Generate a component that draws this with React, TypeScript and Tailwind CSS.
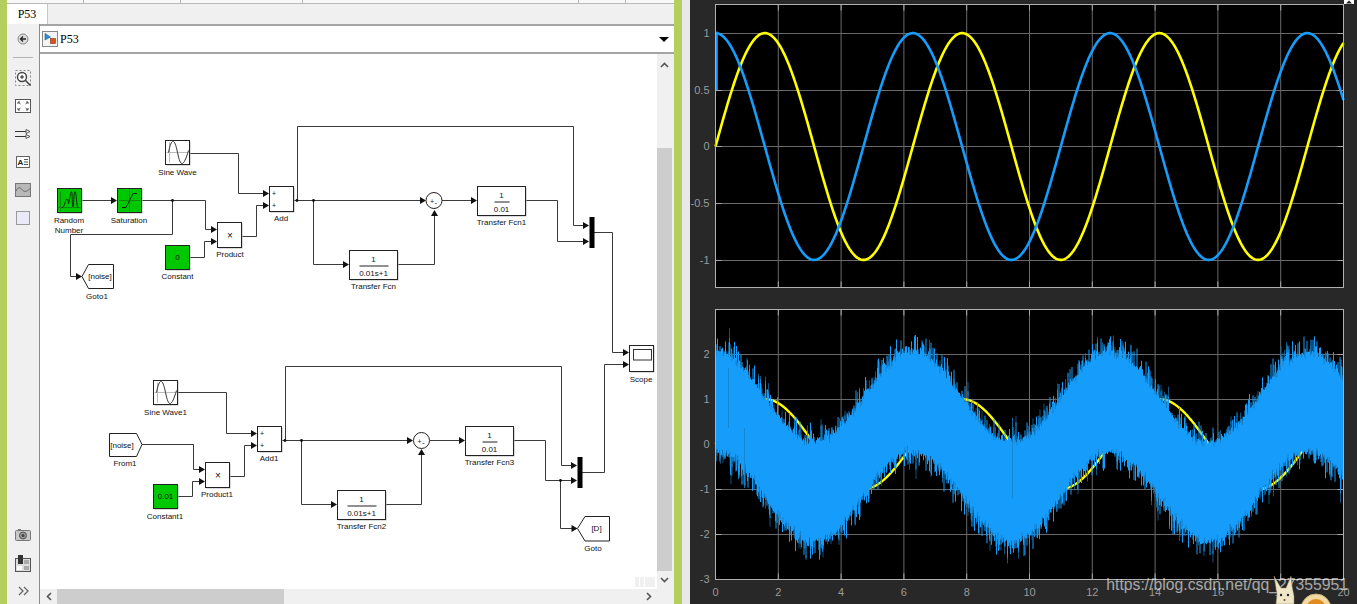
import type { ReactNode } from 'react'

const FONT = '"Liberation Sans", Arial, sans-serif'

// ---------- scope curves ----------
const AX_LEFT = 25.5
const PX_PER_T = 31.4
const tToX = (t: number) => AX_LEFT + t * PX_PER_T

function curve(fn: (t: number) => number, yOf: (v: number) => number) {
  let d = ''
  for (let x = 0; x <= 628; x += 1) {
    const t = x / PX_PER_T
    d += `${x === 0 ? 'M' : 'L'}${(AX_LEFT + x).toFixed(1)} ${yOf(fn(t)).toFixed(2)} `
  }
  return d
}

function rng(seed: number) {
  let a = seed
  return () => {
    a = (a + 0x6d2b79f5) | 0
    let r = Math.imul(a ^ (a >>> 15), 1 | a)
    r = (r + Math.imul(r ^ (r >>> 7), 61 | r)) ^ r
    return ((r ^ (r >>> 14)) >>> 0) / 4294967296
  }
}

const bottomY = (v: number) => 136 + -44.9 * v + 0

function noiseBand() {
  const rand = rng(27355951)
  let main = ''
  let dark = ''
  for (let x = 0; x <= 628; x += 0.5) {
    const t = x / PX_PER_T
    const c = Math.cos(t)
    const up = c + 0.98 + Math.pow(rand(), 4) * 0.42 + rand() * 0.1
    const down = c - 1.08 - Math.pow(rand(), 4) * 0.42 - rand() * 0.14
    main += `M${(AX_LEFT + x).toFixed(1)} ${bottomY(up).toFixed(1)}V${bottomY(down).toFixed(1)}`
    if (rand() < 0.14) {
      const extra = rand() * 0.22
      dark += `M${(AX_LEFT + x).toFixed(1)} ${bottomY(up + extra).toFixed(1)}V${bottomY(up - 0.08).toFixed(1)}`
    }
    if (rand() < 0.14) {
      const extra = rand() * 0.22
      dark += `M${(AX_LEFT + x).toFixed(1)} ${bottomY(down - extra).toFixed(1)}V${bottomY(down + 0.08).toFixed(1)}`
    }
  }
  return { main, dark }
}

const band = noiseBand()

function Axes({ top, bottom, yTicks, xLabels }: { top: number; bottom: number; yTicks: { y: number; label: string }[]; xLabels?: boolean }) {
  const xs = [0, 2, 4, 6, 8, 10, 12, 14, 16, 18, 20]
  return (
    <g fontFamily={FONT} fontSize="11" fill="#9a9a9a">
      {xs.slice(1, -1).map((t) => (
        <g key={t}>
          <path d={`M${tToX(t)} ${top}V${bottom}`} stroke="#6a6a6a" />
          <path d={`M${tToX(t)} ${top}v6M${tToX(t)} ${bottom}v-6`} stroke="#a8a8a8" />
        </g>
      ))}
      {yTicks.map((k) => (
        <g key={k.label}>
          <path d={`M${AX_LEFT} ${k.y}H653.5`} stroke="#6a6a6a" />
          <path d={`M${AX_LEFT} ${k.y}h6M653.5 ${k.y}h-6`} stroke="#a8a8a8" />
          <text x="19.5" y={k.y + 3.5} textAnchor="end">{k.label}</text>
        </g>
      ))}
      {xLabels &&
        xs.map((t) => (
          <text key={t} x={tToX(t)} y={bottom + 16} textAnchor="middle">{t}</text>
        ))}
    </g>
  )
}

function TopPlot() {
  const y = (v: number) => 146.5 - 113.4 * v * 1
  return (
    <svg width="667" height="298" className="block shrink-0">
      <rect x="25.5" y="4.5" width="628" height="283" fill="#000" />
      <Axes
        top={4.5}
        bottom={287.5}
        yTicks={[
          { y: 33.5, label: '1' },
          { y: 90.5, label: '0.5' },
          { y: 146.5, label: '0' },
          { y: 203.5, label: '-0.5' },
          { y: 260.5, label: '-1' },
        ]}
      />
      <path d={curve((t) => Math.sin(t), y)} fill="none" stroke="#ffff00" strokeWidth="2.6" />
      <path d={`M26.5 90V33 ${curve((t) => Math.cos(t), y).replace('M', 'L')}`} fill="none" stroke="#169dfb" strokeWidth="2.6" />
      <rect x="25.5" y="4.5" width="628" height="283" fill="none" stroke="#b0b0b0" />
      <rect x="654" y="0" width="10" height="4" fill="#fff" />
      <path d="M659 .5l-3 3h6z" fill="#222" />
    </svg>
  )
}

function BottomPlot() {
  return (
    <svg width="667" height="306" className="block shrink-0">
      <rect x="25.5" y="1.5" width="628" height="270" fill="#000" />
      <Axes
        top={1.5}
        bottom={271.5}
        yTicks={[
          { y: 46.5, label: '2' },
          { y: 91.5, label: '1' },
          { y: 136.5, label: '0' },
          { y: 181.5, label: '-1' },
          { y: 226.5, label: '-2' },
        ]}
        xLabels
      />
      <text x="19.5" y="275" textAnchor="end" fontFamily={FONT} fontSize="11" fill="#9a9a9a">-3</text>
      <path d={curve((t) => Math.sin(t), bottomY)} fill="none" stroke="#ffff00" strokeWidth="2.4" />
      <path d={band.main} fill="none" stroke="#169dfb" strokeWidth="1" />
      <path d={band.dark} fill="none" stroke="#1477b8" strokeWidth="0.7" />
      <path d="M38.5 60V120M54.5 120V180M322.5 110V190" fill="none" stroke="#1480c8" strokeWidth="0.8" />
      <rect x="25.5" y="1.5" width="628" height="270" fill="none" stroke="#b0b0b0" />
    </svg>
  )
}

// ---------- simulink diagram (coordinates are page coordinates shifted by canvas origin) ----------
const OX = 40
const OY = 54

function Wire({ d }: { d: string }) {
  return <path d={d} fill="none" stroke="#3a3a3a" strokeWidth="1" />
}

function Arrow({ x, y, dir = 'r' }: { x: number; y: number; dir?: 'r' | 'u' }) {
  if (dir === 'u') return <path d={`M${x} ${y}l-3.5 6h7z`} fill="#111" />
  return <path d={`M${x} ${y}l-6 -3.5v7z`} fill="#111" />
}

function Dot({ x, y }: { x: number; y: number }) {
  return <circle cx={x} cy={y} r="1.4" fill="#111" />
}

function Label({ x, y, children, size = 8 }: { x: number; y: number; children: ReactNode; size?: number }) {
  return (
    <text x={x} y={y} textAnchor="middle" fontFamily={FONT} fontSize={size} fill="#111">
      {children}
    </text>
  )
}

function Box({ x, y, w, h, fill = '#fff', children }: { x: number; y: number; w: number; h: number; fill?: string; children?: ReactNode }) {
  return (
    <g>
      <rect x={x + 1} y={y + 1} width={w} height={h} fill="#b8b8b8" />
      <rect x={x} y={y} width={w} height={h} fill={fill} stroke="#222" />
      {children}
    </g>
  )
}

function SineBlock({ x, y, label }: { x: number; y: number; label: string }) {
  return (
    <Box x={x} y={y} w={24} h={24}>
      <path d={`M${x + 4} ${y + 2}V${y + 22}M${x + 1} ${y + 12}H${x + 23}`} stroke="#bbb" />
      <path
        d={`M${x + 3} ${y + 12}C${x + 6} ${y - 3} ${x + 9} ${y - 3} ${x + 12} ${y + 12}C${x + 15} ${y + 27} ${x + 18} ${y + 27} ${x + 23} ${y + 10}`}
        fill="none"
        stroke="#333"
      />
      <Label x={x + 12} y={y + 34}>{label}</Label>
    </Box>
  )
}

function TransferFcn({ x, y, den, label }: { x: number; y: number; den: string; label: string }) {
  return (
    <Box x={x} y={y} w={48} h={29}>
      <Label x={x + 24} y={y + 11}>1</Label>
      <path d={`M${x + (den.length > 4 ? 10 : 17)} ${y + 15.5}H${x + (den.length > 4 ? 39 : 32)}`} stroke="#222" />
      <Label x={x + 24} y={y + 25}>{den}</Label>
      <Label x={x + 24} y={y + 38.5}>{label}</Label>
    </Box>
  )
}

function SumBlock({ cx, cy }: { cx: number; cy: number }) {
  return (
    <g>
      <circle cx={cx} cy={cy} r="8" fill="#fff" stroke="#222" />
      <text x={cx - 4} y={cy + 3} fontFamily={FONT} fontSize="7" fill="#222">+</text>
      <text x={cx + 0.5} y={cy + 4} fontFamily={FONT} fontSize="8" fill="#222">-</text>
    </g>
  )
}

function Diagram() {
  return (
    <svg width="617" height="535" viewBox={`${OX} ${OY} 617 535`} className="block">
      {/* upper loop */}
      <Wire d="M82 200.5H112M142 200.5H205.5V229.5H212M172.5 200.5V234.5H70.5V276.5H77" />
      <Wire d="M190 153.5H238.5V193.5H264M190 257.5H204.5V241.5H212M242 236.5H256.5V205.5H264" />
      <Wire d="M294 200.5H421M297.5 200.5V126.5H573.5V225.5H584M313.5 200.5V264.5H344M398 264.5H434.5V216" />
      <Wire d="M442 200.5H472M525 200.5H557.5V241.5H584M594 232.5H612.5V352.5H624M582 472.5H604.5V364.5H624" />
      {/* lower loop */}
      <Wire d="M142 444.5H193.5V469.5H200M178 392.5H226.5V433.5H252M178 496.5H192.5V481.5H200M230 476.5H244.5V445.5H252" />
      <Wire d="M282 440.5H408M285.5 440.5V366.5H561.5V465.5H572M301.5 440.5V504.5H332M386 504.5H421.5V455" />
      <Wire d="M430 440.5H460M514 440.5H545.5V480.5H572M560.5 480.5V528.5H572" />

      <Arrow x={117} y={200.5} />
      <Arrow x={217} y={229.5} />
      <Arrow x={217} y={241.5} />
      <Arrow x={269} y={193.5} />
      <Arrow x={269} y={205.5} />
      <Arrow x={82} y={276.5} />
      <Arrow x={426} y={200.5} />
      <Arrow x={477} y={200.5} />
      <Arrow x={349} y={264.5} />
      <Arrow x={434.5} y={210} dir="u" />
      <Arrow x={589} y={225.5} />
      <Arrow x={589} y={241.5} />
      <Arrow x={629} y={352.5} />
      <Arrow x={629} y={364.5} />
      <Arrow x={205} y={469.5} />
      <Arrow x={205} y={481.5} />
      <Arrow x={257} y={433.5} />
      <Arrow x={257} y={445.5} />
      <Arrow x={413} y={440.5} />
      <Arrow x={465} y={440.5} />
      <Arrow x={337} y={504.5} />
      <Arrow x={421.5} y={449} dir="u" />
      <Arrow x={577} y={465.5} />
      <Arrow x={577} y={480.5} />
      <Arrow x={577.5} y={528.5} />

      <Dot x={172.5} y={200.5} />
      <Dot x={297} y={200.5} />
      <Dot x={313.5} y={200.5} />
      <Dot x={285} y={440.5} />
      <Dot x={301.5} y={440.5} />
      <Dot x={560.5} y={480.5} />

      <SineBlock x={165.5} y={140.5} label="Sine Wave" />
      <Box x={57.5} y={188.5} w={24} h={24} fill="#00c800">
        <path d="M60.5 191.5V210.5M58.5 207.5H80.5" stroke="#0a8a0a" />
        <path d="M62 207.5C65 207.5 65 199 67 199S68 207 69 202 70.5 191.5 71.5 191.5 72 207 73 207 73.5 191.5 75 191.5 76.5 208 78 208" fill="none" stroke="#0c2c0c" />
        <Label x={69} y={223}>Random</Label>
        <Label x={69} y={233}>Number</Label>
      </Box>
      <Box x={117.5} y={188.5} w={24} h={24} fill="#00c800">
        <path d="M129.5 190V211M119 200.5H140" stroke="#0a8a0a" />
        <path d="M122 207.5H126L133 193.5H137" fill="none" stroke="#0c2c0c" />
        <Label x={129} y={223}>Saturation</Label>
      </Box>
      <Box x={217.5} y={222.5} w={24} h={25}>
        <Label x={230} y={239} size={10}>×</Label>
        <Label x={230} y={257}>Product</Label>
      </Box>
      <Box x={165.5} y={245.5} w={24} h={24} fill="#00c800">
        <Label x={177.5} y={260}>0</Label>
        <Label x={177.5} y={279}>Constant</Label>
      </Box>
      <Box x={269.5} y={186.5} w={24} h={25}>
        <Label x={274} y={196} size={7}>+</Label>
        <Label x={274} y={208} size={7}>+</Label>
        <Label x={281} y={221}>Add</Label>
      </Box>
      <path d="M82 276.5L88.5 264.5H113.5V288.5H88.5Z" fill="#fff" stroke="#222" />
      <Label x={100} y={279}>[noise]</Label>
      <Label x={97} y={299}>Goto1</Label>
      <SumBlock cx={434} cy={200.5} />
      <TransferFcn x={477.5} y={186.5} den="0.01" label="Transfer Fcn1" />
      <TransferFcn x={349.5} y={250.5} den="0.01s+1" label="Transfer Fcn" />
      <rect x="589.5" y="217" width="5" height="31" fill="#000" />

      <Box x={629.5} y={345.5} w={24} h={26}>
        <rect x="633.5" y="349.5" width="18" height="10.5" fill="#fff" stroke="#333" />
        <Label x={641} y={382}>Scope</Label>
      </Box>

      <SineBlock x={153.5} y={380.5} label="Sine Wave1" />
      <path d="M109.5 433.5H136.5L142 444.5L136.5 456.5H109.5Z" fill="#fff" stroke="#222" />
      <Label x={122} y={447.5}>[noise]</Label>
      <Label x={125} y={466}>From1</Label>
      <Box x={205.5} y={462.5} w={24} h={25}>
        <Label x={218} y={479} size={10}>×</Label>
        <Label x={217} y={497}>Product1</Label>
      </Box>
      <Box x={153.5} y={484.5} w={24} h={24} fill="#00c800">
        <Label x={165.5} y={499}>0.01</Label>
        <Label x={165} y={519}>Constant1</Label>
      </Box>
      <Box x={257.5} y={426.5} w={24} h={25}>
        <Label x={262} y={436} size={7}>+</Label>
        <Label x={262} y={448} size={7}>+</Label>
        <Label x={269} y={461}>Add1</Label>
      </Box>
      <SumBlock cx={421.5} cy={440.5} />
      <TransferFcn x={465.5} y={426.5} den="0.01" label="Transfer Fcn3" />
      <TransferFcn x={337.5} y={490.5} den="0.01s+1" label="Transfer Fcn2" />
      <rect x="577.5" y="457" width="5" height="31" fill="#000" />
      <path d="M577.5 528.5L585 516.5H609.5V541H585Z" fill="#fff" stroke="#222" />
      <Label x={596.5} y={531}>[D]</Label>
      <Label x={593} y={551}>Goto</Label>
    </svg>
  )
}

// ---------- sidebar icons ----------
const icons: { key: string; node: ReactNode }[] = [
  {
    key: 'zoom',
    node: (
      <svg width="18" height="18" viewBox="0 0 18 18">
        <rect x="1.5" y="1.5" width="15" height="15" fill="none" stroke="#888" strokeDasharray="2 2" />
        <circle cx="8" cy="8" r="4.5" fill="#fff" stroke="#444" strokeWidth="1.4" />
        <path d="M6 8h4M8 6v4" stroke="#222" />
        <path d="M11.5 11.5l5 5" stroke="#444" strokeWidth="1.6" />
      </svg>
    ),
  },
  {
    key: 'fit',
    node: (
      <svg width="16" height="14" viewBox="0 0 16 14">
        <rect x=".5" y=".5" width="15" height="13" fill="#fff" stroke="#555" />
        <path d="M3 5V3h2M3 3l2.5 2M13 5V3h-2M13 3l-2.5 2M3 9v2h2M3 11l2.5-2M13 9v2h-2M13 11l-2.5-2" fill="none" stroke="#555" />
      </svg>
    ),
  },
  {
    key: 'lines',
    node: (
      <svg width="16" height="10" viewBox="0 0 16 10">
        <path d="M0 2.5H12M0 7.5H12" stroke="#333" />
        <path d="M11 .5l4 2-4 2zM11 5.5l4 2-4 2z" fill="#fff" stroke="#555" />
      </svg>
    ),
  },
  {
    key: 'note',
    node: (
      <svg width="14" height="12" viewBox="0 0 14 12">
        <rect x=".5" y=".5" width="13" height="11" fill="#fff" stroke="#666" />
        <text x="1.5" y="9" fontFamily={FONT} fontSize="8" fontWeight="700" fill="#222">A</text>
        <path d="M8 3.5h4M8 6h4M8 8.5h4" stroke="#555" />
      </svg>
    ),
  },
  {
    key: 'image',
    node: (
      <svg width="16" height="14" viewBox="0 0 16 14">
        <rect x=".5" y=".5" width="15" height="13" fill="#b8b8b8" stroke="#777" />
        <path d="M1 8c2-4 4-4 6-1.5s4 3 8-1" fill="none" stroke="#666" />
      </svg>
    ),
  },
  {
    key: 'area',
    node: (
      <svg width="14" height="14" viewBox="0 0 14 14">
        <rect x=".5" y=".5" width="13" height="13" fill="#e9e9f8" stroke="#999" />
      </svg>
    ),
  },
]

function SideSlot({ children, h = 'h-[28px]' }: { children: ReactNode; h?: string }) {
  return <div className={`flex items-center justify-center ${h}`}>{children}</div>
}

function Sidebar() {
  return (
    <div className="flex w-[32px] shrink-0 flex-col bg-[#f0f0f0] pt-px">
      <SideSlot>
        <svg width="12" height="12" viewBox="0 0 12 12">
          <circle cx="6" cy="6" r="5" fill="#ddd" stroke="#888" />
          <path d="M9 6H4M6 3.5L3.5 6 6 8.5" fill="none" stroke="#222" strokeWidth="1.3" />
        </svg>
      </SideSlot>
      <div className="mx-[6px] mt-[4px] mb-[6px] h-px bg-[#b4b4b4]" />
      {icons.map((i) => (
        <SideSlot key={i.key}>{i.node}</SideSlot>
      ))}
      <div className="mt-auto">
        <SideSlot>
          <svg width="16" height="12" viewBox="0 0 16 12">
            <rect x=".5" y="1.5" width="15" height="10" rx="1" fill="#c8c8c8" stroke="#777" />
            <circle cx="8" cy="6.5" r="3.5" fill="#999" stroke="#555" />
            <circle cx="8" cy="6.5" r="1.5" fill="#444" />
            <path d="M3 .5h3" stroke="#777" />
          </svg>
        </SideSlot>
        <SideSlot>
          <svg width="16" height="17" viewBox="0 0 16 17">
            <rect x=".5" y="3.5" width="15" height="13" fill="#ddd" stroke="#555" />
            <rect x="9" y="5" width="5" height="4" fill="#aaa" />
            <rect x="9" y="11" width="5" height="4" fill="#aaa" />
            <rect x="2" y="11" width="5" height="4" fill="#fff" />
            <rect x="3" y="0" width="5" height="9" fill="#333" />
          </svg>
        </SideSlot>
        <SideSlot h="h-[27px]">
          <svg width="11" height="10" viewBox="0 0 11 10">
            <path d="M1 1l4 4-4 4M6 1l4 4-4 4" fill="none" stroke="#666" strokeWidth="1.3" />
          </svg>
        </SideSlot>
      </div>
    </div>
  )
}

function Chevron({ dir }: { dir: 'up' | 'down' | 'left' | 'right' }) {
  const d = { up: 'M1 5l3.5-3.5L8 5', down: 'M1 1l3.5 3.5L8 1', left: 'M5 1L1.5 4.5 5 8', right: 'M1 1l3.5 3.5L1 8' }[dir]
  const size = dir === 'up' || dir === 'down' ? { width: 9, height: 6 } : { width: 6, height: 9 }
  return (
    <svg {...size} className="block">
      <path d={d} fill="none" stroke="#555" strokeWidth="1.6" />
    </svg>
  )
}

function ModelIcon() {
  return (
    <svg width="16" height="16" viewBox="0 0 16 16">
      <rect x=".5" y=".5" width="15" height="15" fill="#f4f4f4" stroke="#888" />
      <path d="M3 2.5L8.5 6 3 9z" fill="#2f8fd0" stroke="#205f8f" strokeWidth=".6" />
      <rect x="8.5" y="7.5" width="5" height="5" fill="#d8541e" stroke="#8a3512" strokeWidth=".6" />
    </svg>
  )
}

function Bunny() {
  return (
    <svg width="62" height="28" viewBox="0 0 62 28" className="block">
      <path d="M2 0L9 12H14L19 0L20 10L22 20V28H4L5 18Z" fill="#efe6c8" stroke="#8d8468" strokeWidth=".5" />
      <circle cx="9" cy="19" r="1.2" fill="#222" />
      <circle cx="16" cy="19" r="1.2" fill="#222" />
      <circle cx="12.5" cy="24" r="1" fill="#6a4a2a" />
      <circle cx="44" cy="33" r="15" fill="#f2d9a0" stroke="#c8b080" />
      <circle cx="44" cy="33" r="10" fill="#e08a20" />
      <circle cx="44" cy="33" r="5" fill="#f6e2b8" />
    </svg>
  )
}

export default function App() {
  return (
    <div className="relative flex h-[604px] w-[1357px] overflow-hidden bg-white" style={{ fontFamily: FONT }}>
      <div className="w-[7px] shrink-0 bg-[#b5cf5c]" />

      {/* Simulink window */}
      <div className="flex w-[667px] shrink-0 flex-col bg-[#f0f0f0]">
        <div className="flex h-[4px] shrink-0 border-b border-[#b8b8b8] bg-[#f8f8f8]">
          <div className="w-[77px] border-r border-[#b8b8b8]" />
          <div className="w-[97px] border-r border-[#b8b8b8]" />
          <div className="w-[122px] border-r border-[#b8b8b8]" />
          <div className="w-[276px] border-r border-[#b8b8b8]" />
          <div className="w-[47px] border-r border-[#b8b8b8]" />
        </div>
        <div className="h-[20px] shrink-0">
          <div className="flex h-[20px] w-[41px] items-center justify-center border-r border-[#c8c8c8] bg-white text-[12px] text-black [font-family:'Liberation_Serif',serif]">
            P53
          </div>
        </div>
        <div className="flex min-h-0 flex-1">
          <Sidebar />
          <div className="flex min-w-0 flex-1 flex-col border-l border-[#8c8c8c]">
            <div className="flex h-[30px] shrink-0 items-center border-y-2 border-[#a4a4a4] bg-white pr-[5px] pl-[2px]">
              <ModelIcon />
              <span className="ml-[2px] text-[12px] text-black [font-family:'Liberation_Serif',serif]">P53</span>
              <div className="ml-auto h-0 w-0 border-x-[5px] border-t-[5px] border-x-transparent border-t-black" />
            </div>
            <div className="relative flex min-h-0 flex-1">
              <div className="h-[535px] w-[617px] shrink-0 bg-white">
                <Diagram />
              </div>
              <div className="flex w-[15px] shrink-0 flex-col bg-[#f0f0f0]">
                <div className="flex h-[94px] shrink-0 justify-center pt-[8px]">
                  <Chevron dir="up" />
                </div>
                <div className="h-[423px] shrink-0 bg-[#cdcdcd]" />
                <div className="flex flex-1 justify-center pt-[6px]">
                  <Chevron dir="down" />
                </div>
              </div>
              <div className="absolute top-[523px] left-[595px] flex h-[10px] gap-px">
                <div className="w-[4px] bg-[#f0f0f0]" />
                <div className="w-[4px] bg-[#f0f0f0]" />
                <div className="w-[10px] bg-[#f0f0f0]" />
              </div>
            </div>
            <div className="flex h-[15px] shrink-0 items-center bg-[#f0f0f0]">
              <div className="flex w-[17px] justify-center">
                <Chevron dir="left" />
              </div>
              <div className="h-full w-[227px] bg-[#cdcdcd]" />
              <div className="ml-auto mr-[22px]">
                <Chevron dir="right" />
              </div>
            </div>
          </div>
        </div>
      </div>

      <div className="w-[8px] shrink-0 bg-[#b5cf5c]" />
      <div className="w-[8px] shrink-0 bg-[#e8e8e8]" />

      {/* Scope window */}
      <div className="flex flex-1 flex-col bg-[#282828]">
        <TopPlot />
        <div className="mt-[10px]">
          <BottomPlot />
        </div>
      </div>

      {/* CSDN watermark */}
      <div className="absolute right-[9px] bottom-[10px] text-[15.75px] leading-[18px] text-white/60">
        https://blog.csdn.net/qq_27355951
      </div>
      <div className="absolute bottom-0 left-[1272px]">
        <Bunny />
      </div>
    </div>
  )
}
